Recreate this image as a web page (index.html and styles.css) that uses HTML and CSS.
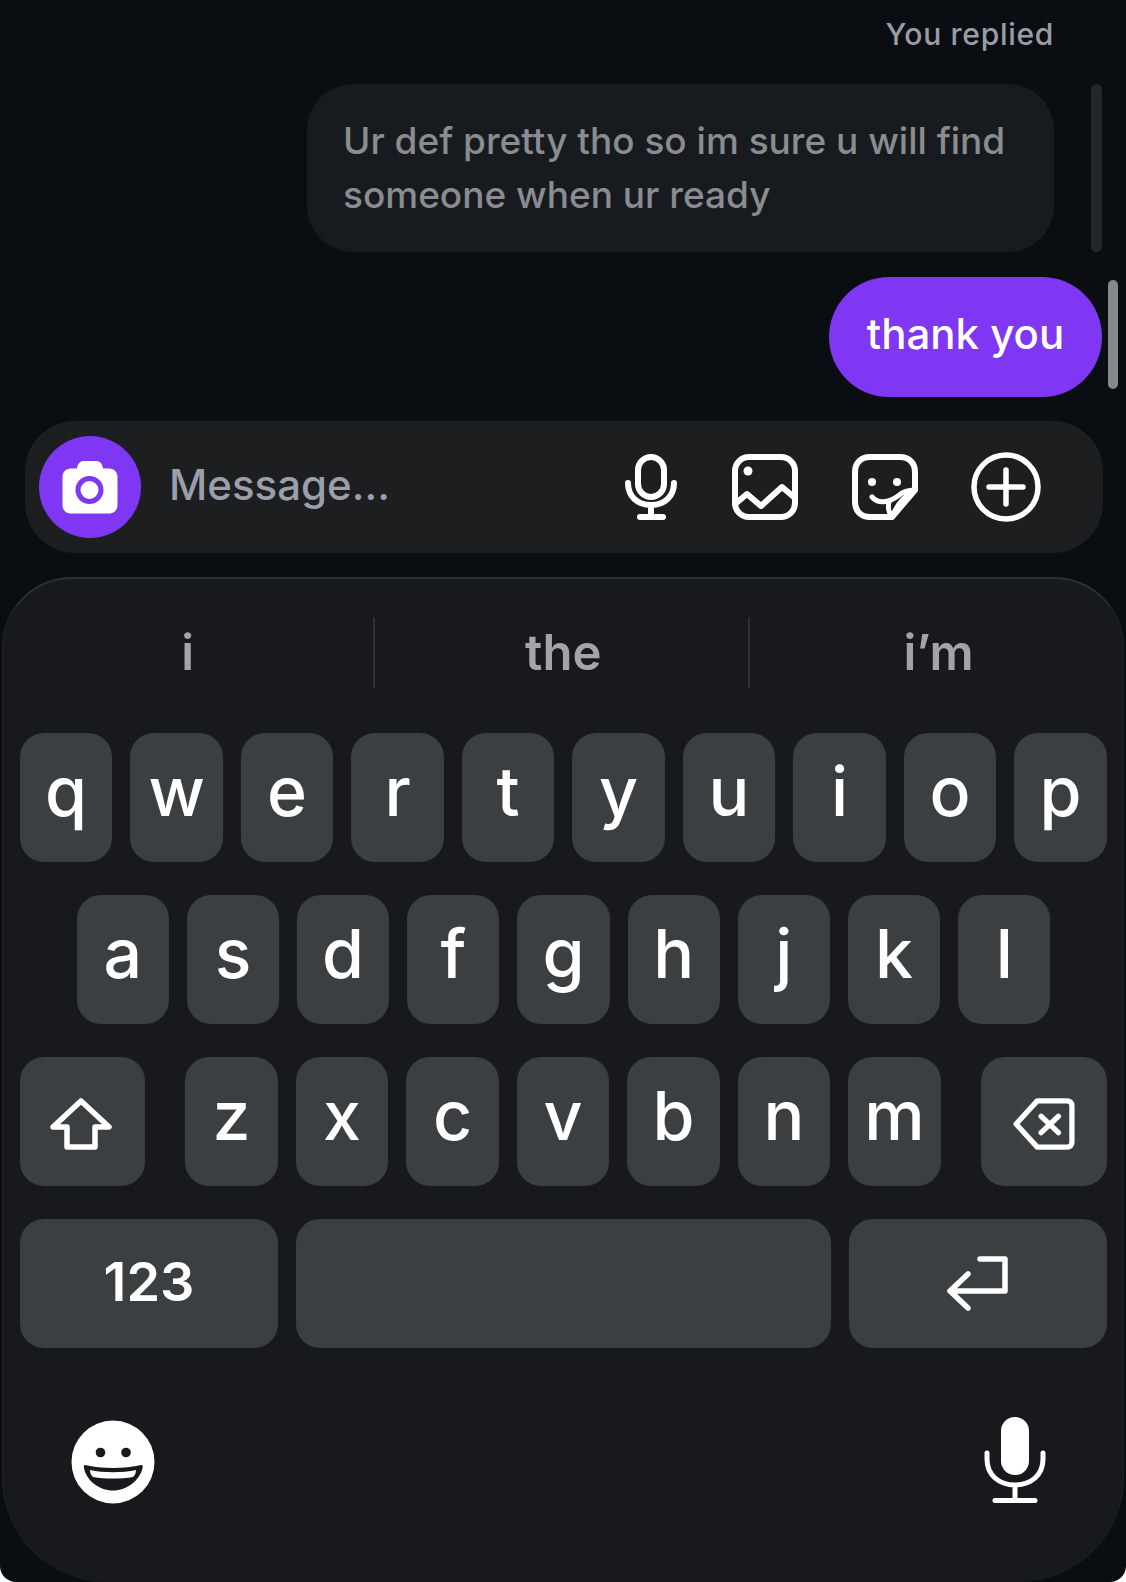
FILE: index.html
```html
<!DOCTYPE html>
<html lang="en">
<head>
<meta charset="utf-8">
<title>Chat</title>
<link rel="stylesheet" href="styles.css">
</head>
<body>
<main class="phone">
  <section class="chat">
    <div class="replied">You replied</div>
    <div class="row row-quote">
      <div class="bubble-quote">Ur def pretty tho so im sure u will find<br>someone when ur ready</div>
      <div class="track"></div>
    </div>
    <div class="row row-own">
      <div class="bubble-own">thank you</div>
      <div class="thumb"></div>
    </div>
  </section>

  <section class="composer">
    <div class="camera">
      <svg width="56" height="54" viewBox="0 0 56 54"><path fill="#fff" d="M15 8.5 C16 3 18 1 22 1 H34 C38 1 40 3 41 8.5 H47 C52 8.500 55.500 12 55.500 17 V45 C55.500 50 52 53.500 47 53.500 H9 C4 53.500 .5 50 .5 45 V17 C.5 12 4 8.500 9 8.500 Z"/><circle cx="27.500" cy="30" r="11.500" fill="#fff" stroke="#7f37f4" stroke-width="5"/></svg>
    </div>
    <div class="placeholder">Message...</div>
    <div class="tools">
      <svg class="ico-mic" width="52" height="66" viewBox="0 0 52 66" fill="none" stroke="#fff" stroke-width="6" stroke-linecap="round"><rect x="13" y="3" width="26" height="40" rx="13"/><path d="M3 29 C3 42 12 51 26 51 C40 51 49 42 49 29 M26 51 V62 M15 63 H38"/></svg>
      <svg class="ico-pic" width="66" height="66" viewBox="0 0 66 66" fill="none" stroke="#fff" stroke-width="6" stroke-linecap="round" stroke-linejoin="round"><rect x="3" y="3" width="60" height="60" rx="14"/><path d="M3 50 L15 40 L29 52 L50 33 L63 44"/><circle cx="16" cy="17" r="4.500" fill="#fff" stroke="none"/></svg>
      <svg class="ico-stk" width="66" height="66" viewBox="0 0 66 66" fill="none" stroke="#fff" stroke-width="6" stroke-linecap="round" stroke-linejoin="round"><path d="M40 63 H18 C9 63 3 57 3 48 V18 C3 9 9 3 18 3 H48 C57 3 63 9 63 18 V36 Z"/><path d="M20 43 C26 50 36 49 46 42 M37 48 C36 52 36 59 40 63 C44 53 52 42 63 36 C56 36 50 38 46 42" stroke-width="5"/><circle cx="20" cy="28" r="4" fill="#fff" stroke="none"/><circle cx="45" cy="28" r="4" fill="#fff" stroke="none"/></svg>
      <svg class="ico-add" width="70" height="70" viewBox="0 0 70 70" fill="none" stroke="#fff" stroke-width="5.500" stroke-linecap="round"><circle cx="35" cy="35" r="32"/><path d="M35 18 V52 M18 35 H52"/></svg>
    </div>
  </section>

  <section class="keyboard">
    <div class="suggest">
      <div class="sug">i</div>
      <div class="sug">the</div>
      <div class="sug">i’m</div>
    </div>
    <div class="keys">
      <div class="krow">
        <div class="key">q</div><div class="key">w</div><div class="key">e</div><div class="key">r</div><div class="key">t</div><div class="key">y</div><div class="key">u</div><div class="key">i</div><div class="key">o</div><div class="key">p</div>
      </div>
      <div class="krow krow-center">
        <div class="key">a</div><div class="key">s</div><div class="key">d</div><div class="key">f</div><div class="key">g</div><div class="key">h</div><div class="key">j</div><div class="key">k</div><div class="key">l</div>
      </div>
      <div class="krow krow-between">
        <div class="key key-mod">
          <svg width="62" height="52" viewBox="0 0 62 52" fill="none" stroke="#fff" stroke-width="5.500" stroke-linejoin="round"><path d="M31 3 L59 29 H45 V49 H17 V29 H3 Z"/></svg>
        </div>
        <div class="letters">
          <div class="key">z</div><div class="key">x</div><div class="key">c</div><div class="key">v</div><div class="key">b</div><div class="key">n</div><div class="key">m</div>
        </div>
        <div class="key key-del">
          <svg width="62" height="52" viewBox="0 0 64 54" fill="none" stroke="#fff" stroke-width="5.500" stroke-linejoin="round" stroke-linecap="round"><path d="M3 27 L25 3 H56 C59 3 61 5 61 8 V46 C61 49 59 51 56 51 H25 Z"/><path d="M29 19 L47 36 M47 19 L29 36"/></svg>
        </div>
      </div>
      <div class="krow">
        <div class="key key-wide key-num">123</div>
        <div class="key key-space"></div>
        <div class="key key-wide">
          <svg width="64" height="56" viewBox="0 0 64 56" fill="none" stroke="#fff" stroke-width="5.500" stroke-linejoin="round" stroke-linecap="round"><path d="M34 4 H59 V36 H4 M22 19 L4 36 L22 53"/></svg>
        </div>
      </div>
    </div>
    <div class="kfoot">
      <svg class="emoji" width="84" height="84" viewBox="0 0 84 84"><circle cx="42" cy="42" r="41.500" fill="#fff"/><circle cx="29.500" cy="32.500" r="4.800" fill="#17191d"/><circle cx="55" cy="32.500" r="4.800" fill="#17191d"/><path fill="#17191d" d="M14 45 C30 49 54 49 70 45 C72 45 72 46 71.500 48 C69 60 56 70.500 42 70.500 C28 70.500 15 60 13 48 C12.500 46 13 45 14 45 Z"/><path fill="#fff" d="M19 50 C32 53 52 53 65 50 C65 53 64 55 62 57 C50 59 34 59 22 57 C20 55 19 53 19 50 Z"/></svg>
      <svg width="62" height="88" viewBox="0 0 62 88" fill="none" stroke="#fff" stroke-width="5" stroke-linecap="round"><rect x="17" y="2" width="28" height="58" rx="14" fill="#fff" stroke="none"/><path d="M3 38 V44 C3 60 15 70 31 70 C47 70 59 60 59 44 V38 M31 70 V85 M11 85.500 H51"/></svg>
    </div>
  </section>
</main>
</body>
</html>
```
FILE: styles.css
```css
* { box-sizing: border-box; }
html, body { margin: 0; padding: 0; background: #fff; }
body { width: 1126px; height: 1582px; overflow: hidden; font-family: Inter, "Liberation Sans", sans-serif; }

.phone {
  width: 1126px;
  height: 1582px;
  background: #0a0e12;
  border-radius: 0 0 16px 16px;
  overflow: hidden;
  display: flex;
  flex-direction: column;
}

/* Chat */
.chat { padding-top: 18px; }
.replied {
  padding-right: 72px;
  text-align: right;
  color: #999ca7;
  font-size: 30px;
  font-weight: 500;
  letter-spacing: .7px;
  line-height: 32px;
  margin-bottom: 34px;
}
.row { display: flex; justify-content: flex-end; }
.row-quote { padding-right: 24px; gap: 37px; margin-bottom: 24.500px; }
.row-own { padding-right: 8px; gap: 6px; }
.bubble-quote {
  width: 747px;
  height: 168px;
  padding: 30px 36px 0;
  background: #171b1f;
  border-radius: 46px;
  color: #8a8c8f;
  font-size: 37px;
  font-weight: 500;
  line-height: 54px;
  white-space: nowrap;
}
.track { width: 11px; height: 168px; border-radius: 6px; background: #24282c; }
.bubble-own {
  width: 273px;
  height: 120px;
  border-radius: 60px;
  background: #7f37f4;
  color: #fff;
  font-size: 42px;
  font-weight: 500;
  line-height: 114px;
  text-align: center;
  white-space: nowrap;
}
.thumb { width: 10px; height: 109px; margin-top: 3px; border-radius: 5px; background: #86888b; }

/* Composer */
.composer {
  margin: 24.500px 23px 0 25px;
  height: 132px;
  padding: 0 62px 0 14px;
  background: #1c1e20;
  border-radius: 50px;
  display: flex;
  align-items: center;
}
.camera {
  width: 102px;
  height: 102px;
  border-radius: 50%;
  background: #7f37f4;
  display: flex;
  align-items: center;
  justify-content: center;
  flex: none;
}
.placeholder {
  margin-left: 28px;
  padding-bottom: 4px;
  color: #9a9fab;
  font-size: 42px;
  font-weight: 500;
  line-height: 50px;
}
.tools { margin-left: auto; display: flex; align-items: center; }
.ico-mic { margin-right: 55px; }
.ico-pic { margin-right: 54px; }
.ico-stk { margin-right: 53px; }

/* Keyboard */
.keyboard {
  margin: 24px 2px 0;
  flex: 1;
  background: #17191d;
  border: 1px solid #212429;
  border-top: 2px solid #2d3136;
  border-bottom: 0;
  border-radius: 70px 70px 105px 105px;
}
.suggest { display: grid; grid-template-columns: 369.500px 375.500px 1fr; padding-top: 38px; }
.sug {
  height: 71px;
  padding-left: 4px;
  color: #a3a4a8;
  font-size: 49px;
  font-weight: 600;
  line-height: 72px;
  text-align: center;
  border-left: 2px solid #2e3135;
}
.sug:first-child { padding-left: 0; border-left: 0; }

.keys {
  padding: 45px 16px 0 17px;
  display: flex;
  flex-direction: column;
  gap: 33px;
}
.krow { display: flex; gap: 18.300px; height: 129px; }
.krow-center { justify-content: center; gap: 18px; }
.krow-between { justify-content: space-between; }
.letters { display: flex; gap: 18.300px; }
.key {
  width: 92.200px;
  flex: none;
  padding-bottom: 14px;
  background: #3c3f41;
  border-radius: 24px;
  color: #fff;
  font-size: 68px;
  font-weight: 500;
  line-height: 100px;
  text-align: center;
  display: flex;
  align-items: center;
  justify-content: center;
}
.key-mod { width: 125px; padding: 4px 4px 0 0; }
.key-del { width: 126px; padding: 4px 0 0; }
.key-wide { width: 258px; padding-bottom: 2px; font-size: 54px; font-weight: 600; }
.key-num { padding-bottom: 4px; }
.key-space { flex: 1; }

.kfoot {
  padding: 67px 77px 0 68px;
  display: flex;
  justify-content: space-between;
  align-items: flex-start;
}
.emoji { margin-top: 5px; }
```
